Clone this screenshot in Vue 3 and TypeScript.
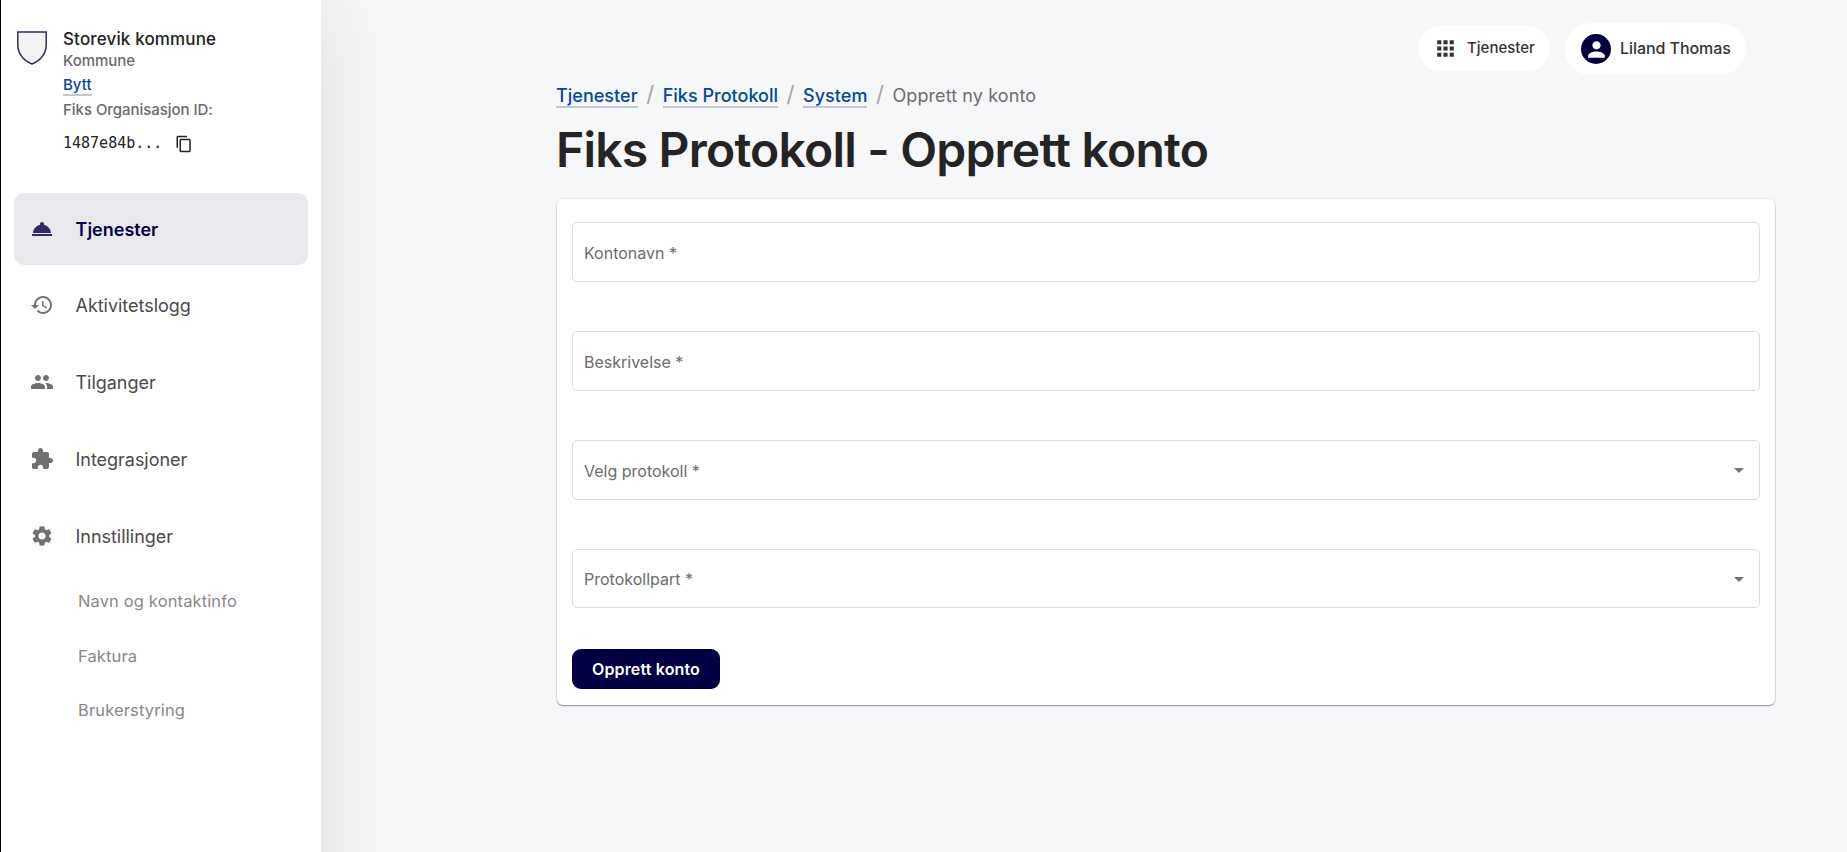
<script setup lang="ts">
interface NavItem {
  label: string
  icon: string
  active?: boolean
}

interface Field {
  id: string
  label: string
  select: boolean
}

const navItems: NavItem[] = [
  {
    label: 'Tjenester',
    icon: 'M2 17h20v2H2zm11.84-9.21c.1-.24.16-.51.16-.79 0-1.1-.9-2-2-2s-2 .9-2 2c0 .28.06.55.16.79C6.25 8.6 3.27 11.93 3 16h18c-.27-4.07-3.25-7.4-7.16-8.21z',
    active: true,
  },
  {
    label: 'Aktivitetslogg',
    icon: 'M13 3c-4.97 0-9 4.03-9 9H1l3.89 3.89.07.14L9 12H6c0-3.87 3.13-7 7-7s7 3.13 7 7-3.13 7-7 7c-1.93 0-3.68-.79-4.94-2.06l-1.42 1.42C8.27 19.99 10.51 21 13 21c4.97 0 9-4.03 9-9s-4.03-9-9-9zm-1 5v5l4.28 2.54.72-1.21-3.5-2.08V8H12z',
  },
  {
    label: 'Tilganger',
    icon: 'M16 11c1.66 0 2.99-1.34 2.99-3S17.66 5 16 5c-1.66 0-3 1.34-3 3s1.34 3 3 3zm-8 0c1.66 0 2.99-1.34 2.99-3S9.66 5 8 5C6.34 5 5 6.34 5 8s1.34 3 3 3zm0 2c-2.33 0-7 1.17-7 3.5V19h14v-2.5c0-2.33-4.67-3.5-7-3.5zm8 0c-.29 0-.62.02-.97.05 1.16.84 1.97 1.97 1.97 3.45V19h6v-2.5c0-2.33-4.67-3.5-7-3.5z',
  },
  {
    label: 'Integrasjoner',
    icon: 'M20.5 11H19V7c0-1.1-.9-2-2-2h-4V3.5C13 2.12 11.88 1 10.5 1S8 2.12 8 3.5V5H4c-1.1 0-1.99.9-1.99 2v3.8H3.5c1.49 0 2.7 1.21 2.7 2.7s-1.21 2.7-2.7 2.7H2V20c0 1.1.9 2 2 2h3.8v-1.5c0-1.49 1.21-2.7 2.7-2.7 1.49 0 2.7 1.21 2.7 2.7V22H17c1.1 0 2-.9 2-2v-4h1.5c1.38 0 2.5-1.12 2.5-2.5S21.88 11 20.5 11z',
  },
  {
    label: 'Innstillinger',
    icon: 'M19.14 12.94c.04-.3.06-.61.06-.94 0-.32-.02-.64-.07-.94l2.03-1.58c.18-.14.23-.41.12-.61l-1.92-3.32c-.12-.22-.37-.29-.59-.22l-2.39.96c-.5-.38-1.03-.7-1.62-.94l-.36-2.54c-.04-.24-.24-.41-.48-.41h-3.84c-.24 0-.43.17-.47.41l-.36 2.54c-.59.24-1.13.57-1.62.94l-2.39-.96c-.22-.08-.47 0-.59.22L2.74 8.87c-.12.21-.08.47.12.61l2.03 1.58c-.05.3-.09.63-.09.94s.02.64.07.94l-2.03 1.58c-.18.14-.23.41-.12.61l1.92 3.32c.12.22.37.29.59.22l2.39-.96c.5.38 1.03.7 1.62.94l.36 2.54c.05.24.24.41.48.41h3.84c.24 0 .44-.17.47-.41l.36-2.54c.59-.24 1.13-.56 1.62-.94l2.39.96c.22.08.47 0 .59-.22l1.92-3.32c.12-.22.07-.47-.12-.61l-2.01-1.58zM12 15.6c-1.98 0-3.6-1.62-3.6-3.6s1.62-3.6 3.6-3.6 3.6 1.62 3.6 3.6-1.62 3.6-3.6 3.6z',
  },
]

const subItems: string[] = ['Navn og kontaktinfo', 'Faktura', 'Brukerstyring']
const crumbs: string[] = ['Tjenester', 'Fiks Protokoll', 'System']

const fields: Field[] = [
  { id: 'name', label: 'Kontonavn *', select: false },
  { id: 'description', label: 'Beskrivelse *', select: false },
  { id: 'protocol', label: 'Velg protokoll *', select: true },
  { id: 'part', label: 'Protokollpart *', select: true },
]
</script>

<template>
  <div class="page">
    <aside class="sidebar">
      <section class="org">
        <svg class="shield" width="32" height="36" viewBox="0 0 32 36">
          <path d="M1.8 2h28.4v12.5c0 9-5 15.5-14.2 19.5C6.8 30 1.8 23.5 1.8 14.5z" fill="#f3f3f5" stroke="#2b2b63" stroke-width="1.5" />
        </svg>
        <div class="org-info">
          <div class="org-name">Storevik kommune</div>
          <div class="org-type">Kommune</div>
          <div class="org-switch"><a class="link">Bytt</a></div>
          <div class="org-label">Fiks Organisasjon ID:</div>
          <div class="org-id">
            <code>1487e84b...</code>
            <svg width="18" height="18" viewBox="0 0 24 24" fill="#222">
              <path d="M16 1H4c-1.1 0-2 .9-2 2v14h2V3h12V1zm3 4H8c-1.1 0-2 .9-2 2v14c0 1.1.9 2 2 2h11c1.1 0 2-.9 2-2V7c0-1.1-.9-2-2-2zm0 16H8V7h11v14z" />
            </svg>
          </div>
        </div>
      </section>

      <nav class="nav">
        <a v-for="item in navItems" :key="item.label" class="nav-item" :class="{ active: item.active }">
          <svg width="24" height="24" viewBox="0 0 24 24"><path :d="item.icon" /></svg>
          <span>{{ item.label }}</span>
        </a>
      </nav>
      <div class="subnav">
        <a v-for="sub in subItems" :key="sub" class="sub-item">{{ sub }}</a>
      </div>
    </aside>

    <main class="main">
      <header class="topbar">
        <button class="pill services">
          <svg width="25" height="25" viewBox="0 0 24 24" fill="#333">
            <path d="M4 8h4V4H4v4zm6 12h4v-4h-4v4zm-6 0h4v-4H4v4zm0-6h4v-4H4v4zm6 0h4v-4h-4v4zm6-10v4h4V4h-4zm-6 4h4V4h-4v4zm6 6h4v-4h-4v4zm0 6h4v-4h-4v4z" />
          </svg>
          <span>Tjenester</span>
        </button>
        <button class="pill user">
          <span class="avatar">
            <svg width="25" height="25" viewBox="0 0 24 24" fill="#fff">
              <path d="M12 12c2.21 0 4-1.79 4-4s-1.79-4-4-4-4 1.79-4 4 1.79 4 4 4zm0 2c-2.67 0-8 1.34-8 4v2h16v-2c0-2.66-5.33-4-8-4z" />
            </svg>
          </span>
          <span>Liland Thomas</span>
        </button>
      </header>

      <div class="crumbs">
        <template v-for="crumb in crumbs" :key="crumb">
          <a class="link">{{ crumb }}</a>
          <span class="slash">/</span>
        </template>
        <span class="current">Opprett ny konto</span>
      </div>

      <h1>Fiks Protokoll - Opprett konto</h1>

      <form class="card" @submit.prevent>
        <div v-for="field in fields" :key="field.id" class="field">
          <span>{{ field.label }}</span>
          <svg v-if="field.select" width="24" height="24" viewBox="0 0 24 24" fill="#747474"><path d="M7 10l5 5 5-5z" /></svg>
        </div>
        <button class="submit">Opprett konto</button>
      </form>
    </main>
  </div>
</template>

<style>
body {
  margin: 0;
  overflow: hidden;
}
</style>

<style scoped>
.page {
  box-sizing: border-box;
  display: flex;
  height: 100vh;
  overflow: hidden;
  border-left: 1px solid #000;
  background: #f6f7f9;
  font-family: Inter, "Liberation Sans", sans-serif;
  color: #242424;
}
button {
  border: 0;
  font-family: inherit;
}
svg {
  display: block;
  flex: none;
}
.sidebar {
  box-sizing: border-box;
  flex: none;
  width: 320px;
  height: calc(100vh + 120px);
  padding-top: 27px;
  background: #fff;
  box-shadow: 0 0 80px rgba(0, 0, 0, 0.11);
}
.org {
  display: flex;
  height: 166px;
  padding-left: 15px;
}
.shield {
  margin-top: 3px;
}
.org-info {
  margin-left: 15px;
  font-size: 15px;
  font-weight: 500;
  color: #6a6a6a;
}
.org-name {
  line-height: 24px;
  font-size: 17px;
  letter-spacing: 0.14px;
  color: #222;
}
.org-type {
  line-height: 19px;
  letter-spacing: -0.05px;
}
.org-switch {
  line-height: 29px;
}
.org-label {
  line-height: 22px;
  letter-spacing: -0.04px;
}
.org-id {
  display: flex;
  align-items: center;
  height: 42px;
  gap: 13px;
  color: #222;
}
.org-id code {
  margin-top: 2px;
  font: 15px "DejaVu Sans Mono", monospace;
}
.org-id svg {
  margin-top: 4px;
}
.link {
  font-weight: 500;
  color: #05479b;
  border-bottom: 2px solid #c6c7ca;
}
.nav {
  display: flex;
  flex-direction: column;
  gap: 5px;
  padding: 0 13px;
}
.nav-item {
  box-sizing: border-box;
  display: flex;
  align-items: center;
  height: 72px;
  padding-left: 16px;
  border-radius: 10px;
  font-size: 18px;
  letter-spacing: -0.03px;
  color: #4a4a4a;
}
.nav-item:not(.active) {
  padding-bottom: 2px;
}
.nav-item svg {
  fill: #707070;
  margin-right: 21.5px;
}
.nav-item.active {
  background: #e9e8ed;
  font-weight: 600;
  letter-spacing: 0;
  color: #020049;
}
.nav-item.active svg {
  fill: #2b2b66;
}
.subnav {
  display: flex;
  flex-direction: column;
  padding: 1px 0 0 77px;
}
.sub-item {
  height: 54.5px;
  line-height: 54.5px;
  font-size: 16.5px;
  letter-spacing: 0.13px;
  color: #888;
}
.main {
  flex: 1;
  min-width: 0;
  padding: 23px 71px 0 235px;
}
.topbar {
  display: flex;
  justify-content: flex-end;
  align-items: flex-start;
  gap: 15px;
  height: 52px;
  margin-right: 30px;
}
.pill {
  box-sizing: border-box;
  display: flex;
  align-items: center;
  background: #fff;
  color: #333;
  font-weight: 500;
  padding: 0 0 0 15px;
}
.services {
  width: 132px;
  height: 45px;
  margin-top: 3px;
  border-radius: 23px;
  gap: 9px;
  font-size: 15px;
}
.services span {
  margin-bottom: 2px;
}
.user {
  width: 181px;
  height: 52px;
  border-radius: 26px;
  padding-left: 16px;
  gap: 9px;
  font-size: 16px;
  letter-spacing: -0.06px;
  white-space: nowrap;
}
.user > span:last-child {
  margin-bottom: 2px;
}
.avatar {
  display: flex;
  align-items: center;
  justify-content: center;
  width: 30px;
  height: 30px;
  border-radius: 50%;
  background: #020042;
}
.crumbs {
  display: flex;
  align-items: baseline;
  height: 26px;
  margin-top: 8px;
  font-size: 18px;
  line-height: 22px;
}
.crumbs .link {
  line-height: 20px;
  letter-spacing: 0.02px;
}
.slash {
  width: 25px;
  text-align: center;
  font-size: 22px;
  color: #a5a5a5;
}
.current {
  letter-spacing: 0.1px;
  color: #6e6e6e;
}
h1 {
  margin: 13px 0 21px;
  line-height: 56px;
  font-size: 48px;
  font-weight: 600;
  letter-spacing: -0.79px;
}
.card {
  box-sizing: border-box;
  width: 1218px;
  height: 506px;
  margin-left: 1px;
  padding: 23px 15px 0;
  border-radius: 6px;
  background: #fff;
  box-shadow: 0 0 0 1px rgba(30, 40, 80, 0.06), 0 1px 1px rgba(20, 20, 40, 0.35), 0 1px 3px rgba(0, 0, 0, 0.08);
}
.field {
  box-sizing: border-box;
  display: flex;
  align-items: center;
  justify-content: space-between;
  height: 60px;
  margin-bottom: 49px;
  padding: 0 8px 0 11px;
  border: 1px solid #dcdcdc;
  border-radius: 5px;
  font-size: 16px;
  color: #6c6c6c;
}
.field span {
  margin-top: 2px;
}
.field:nth-child(4) {
  height: 59px;
  margin-bottom: 41px;
}
.field:nth-child(4) span {
  margin-top: 0;
}
.submit {
  width: 148px;
  height: 40px;
  padding: 0;
  border-radius: 9px;
  background: #020042;
  color: #fff;
  font-size: 16px;
  font-weight: 600;
  letter-spacing: 0.15px;
}
</style>
